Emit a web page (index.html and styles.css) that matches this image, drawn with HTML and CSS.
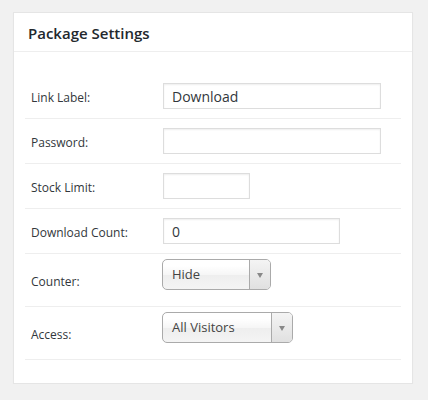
FILE: index.html
```html
<!DOCTYPE html>
<html>
<head>
<meta charset="utf-8">
<link rel="stylesheet" href="styles.css">
</head>
<body>
<div class="postbox">
  <div class="postbox-header"><h2 class="postbox-title">Package Settings</h2></div>
  <div class="postbox-body">
    <div class="row">
      <label class="row-label">Link Label:</label>
      <div class="row-field"><input class="text-input w-wide" type="text" value="Download"></div>
    </div>
    <div class="row">
      <label class="row-label">Password:</label>
      <div class="row-field"><input class="text-input w-wide" type="text" value=""></div>
    </div>
    <div class="row">
      <label class="row-label">Stock Limit:</label>
      <div class="row-field"><input class="text-input w-small" type="text" value=""></div>
    </div>
    <div class="row">
      <label class="row-label">Download Count:</label>
      <div class="row-field"><input class="text-input w-mid" type="text" value="0"></div>
    </div>
    <div class="row row-select">
      <label class="row-label">Counter:</label>
      <div class="row-field">
        <div class="chosen w-hide"><span class="chosen-text">Hide</span><span class="chosen-arrow"><b class="tri"></b></span></div>
      </div>
    </div>
    <div class="row row-select">
      <label class="row-label">Access:</label>
      <div class="row-field">
        <div class="chosen w-access"><span class="chosen-text">All Visitors</span><span class="chosen-arrow"><b class="tri"></b></span></div>
      </div>
    </div>
  </div>
</div>
</body>
</html>
```

FILE: styles.css
```css
html, body {
  margin: 0;
  padding: 0;
  background: #f1f1f1;
}
body {
  padding: 12px 15px 0 13px;
  font-family: "Open Sans", "Noto Sans", sans-serif;
}
.postbox {
  width: 398px;
  height: 370px;
  background: #fff;
  border: 1px solid #e5e5e5;
  box-shadow: 0 1px 1px rgba(0,0,0,0.04);
}
.postbox-header {
  height: 38px;
  border-bottom: 1px solid #eeeeee;
  display: flex;
  align-items: center;
  padding-left: 14px;
}
.postbox-title {
  margin: 0;
  font-size: 15px;
  font-weight: 600;
  color: #23282d;
  position: relative;
  top: 1px;
}
.postbox-body {
  padding: 22px 11px 0 11px;
}
.row {
  display: flex;
  align-items: center;
  height: 44px;
  border-bottom: 1px solid #eeeeee;
}
.row-select {
  height: 52px;
}
.row-label {
  width: 132px;
  padding-left: 6px;
  font-size: 12px;
  color: #32373c;
  padding-top: 3px;
}
.row-field {
  display: flex;
}
.text-input {
  box-sizing: border-box;
  height: 26px;
  margin: 0;
  border: 1px solid #dddddd;
  box-shadow: inset 0 1px 2px rgba(0,0,0,0.07);
  background: #fff;
  padding: 0 8px;
  font-family: "Open Sans", "Noto Sans", sans-serif;
  font-size: 14px;
  color: #32373c;
  outline: none;
}
.w-wide { width: 218px; }
.w-small { width: 87px; }
.w-mid { width: 177px; }
.chosen {
  box-sizing: border-box;
  height: 31px;
  margin-bottom: 11px;
  margin-left: -1px;
  border: 1px solid #aaaaaa;
  border-radius: 5px;
  background: linear-gradient(#ffffff 20%, #f6f6f6 50%, #eeeeee 52%, #f4f4f4 100%);
  display: flex;
  align-items: stretch;
  overflow: hidden;
}
.w-hide { width: 109px; }
.w-access { width: 131px; }
.chosen-text {
  flex: 1;
  display: flex;
  align-items: center;
  padding-left: 9px;
  padding-bottom: 1px;
  font-size: 13px;
  color: #444444;
}
.chosen-arrow {
  width: 20px;
  border-left: 1px solid #aaaaaa;
  background: linear-gradient(#f4f4f4, #e0e0e0);
  display: flex;
  align-items: center;
  justify-content: center;
}
.tri {
  width: 0;
  height: 0;
  border-left: 3px solid transparent;
  border-right: 3px solid transparent;
  border-top: 5px solid #888888;
  margin-top: 1px;
}
```
